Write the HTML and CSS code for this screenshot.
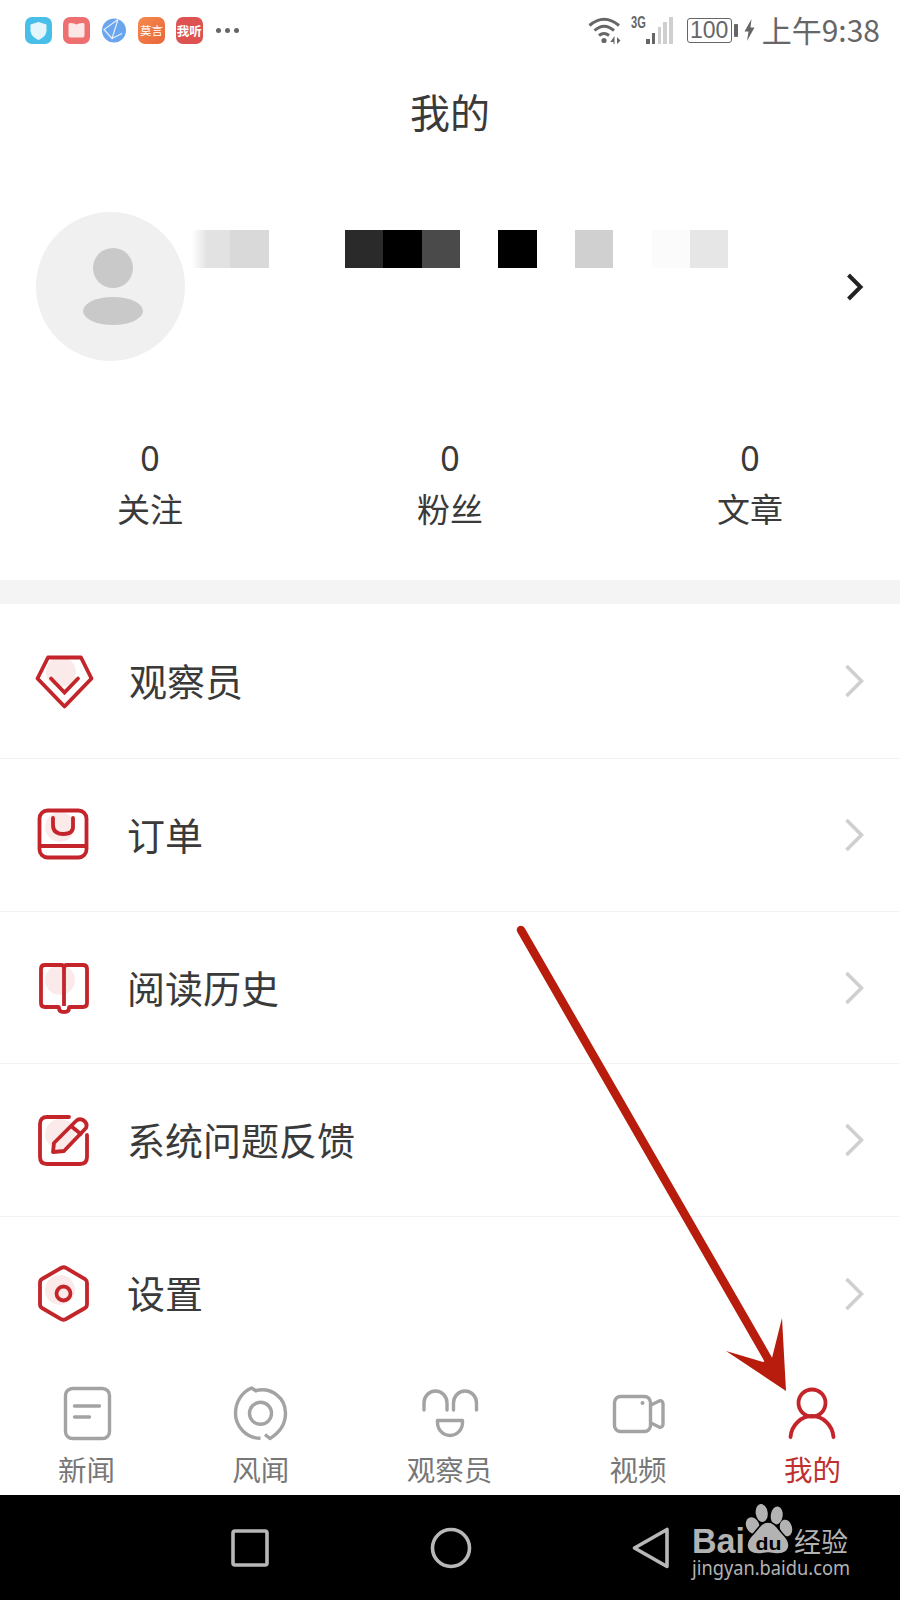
FILE: index.html
```html
<!DOCTYPE html>
<html lang="zh">
<head>
<meta charset="utf-8">
<title>我的</title>
<link rel="stylesheet" href="styles.css">
</head>
<body>
<div class="app">
  <div class="status">
    <div class="notifs">
      <span class="nicon n-blue"><svg width="27" height="27" viewBox="0 0 27 27"><path d="M13.500 5l8 2.500v6c0 4.500-3.500 7.500-8 9.500c-4.500-2-8-5-8-9.500v-6z" fill="#e4f5fb"/></svg></span>
      <span class="nicon n-pink"><svg width="27" height="27" viewBox="0 0 27 27"><path d="M5.500 7.500q0-2 2-1.500q4 0 6 1.500q2-1.500 6-1.500q2-.5 2 1.500v11q0 2-2 2h-12q-2 0-2-2z" fill="#fde6e6"/></svg></span>
      <span class="nicon"><svg width="27" height="27" viewBox="0 0 27 27"><circle cx="14" cy="13.500" r="12" fill="#6aa5ee"/><path d="M18 2.500l-14 10l8 9l6-19M12 21.500l10-5" fill="none" stroke="#e4effc" stroke-width="1.200"/></svg></span>
      <span class="nicon n-orange">莫言</span>
      <span class="nicon n-red">我听</span>
      <span class="ndots"><i></i><i></i><i></i></span>
    </div>
    <div class="sysinfo">
      <svg class="wifi" width="34" height="28" viewBox="0 0 34 28"><g fill="none" stroke="#666" stroke-width="3"><path d="M1.500 9.500Q16-3 31 9.500"/><path d="M6.500 14.500Q16 6 26 14.500"/><path d="M11 19.500Q16 15.500 21 19.500"/></g><circle cx="16" cy="24.500" r="2.600" fill="#666"/><path d="M23 25l3.500-5v8h-1v-2h-3.500zM29 21l3.500 3.500l-3.500 3.500z" fill="#666"/></svg>
      <div class="signal">
        <span class="g3">3G</span>
        <span class="bars"><i class="b1"></i><i class="b2"></i><i class="b3"></i><i class="b4"></i><i class="b5"></i></span>
      </div>
      <div class="battery"><span class="bat-box">100</span><i class="bat-nub"></i></div>
      <svg class="bolt" width="11" height="22" viewBox="0 0 11 22"><path d="M7.500 0L0.500 12.500H4.500L3 22L10.500 8.500H6.500z" fill="#666"/></svg>
      <span class="clock">上午9:38</span>
    </div>
  </div>

  <h1 class="title">我的</h1>

  <div class="profile">
    <div class="avatar"><i class="av-head"></i><i class="av-body"></i></div>
    <div class="name">
      <i class="t t-fade"></i><i class="t t-d9"></i><i class="t"></i><i class="t"></i><i class="t t-2a"></i><i class="t t-00"></i><i class="t t-4a"></i><i class="t"></i><i class="t t-00"></i><i class="t"></i><i class="t t-d0"></i><i class="t"></i><i class="t t-fb"></i><i class="t t-e6"></i>
    </div>
    <svg class="pro-chev" width="18" height="28" viewBox="0 0 18 28"><path d="M2.500 2l12 12l-12 12" fill="none" stroke="#222" stroke-width="4"/></svg>
  </div>

  <div class="stats">
    <div class="stat"><span class="num">0</span><span class="lab">关注</span></div>
    <div class="stat"><span class="num">0</span><span class="lab">粉丝</span></div>
    <div class="stat"><span class="num">0</span><span class="lab">文章</span></div>
  </div>

  <div class="band"></div>

  <div class="menu">
    <div class="row">
      <svg class="ico" width="60" height="60" viewBox="0 0 60 60"><circle cx="27" cy="21" r="15" fill="#fbeaea"/><path d="M14 6.500h33L57.500 27.500L30.500 55.500L3.500 27.500z" class="red" stroke-linejoin="round"/><path d="M17 27.500l13.500 14L44 27.500" class="red" stroke-linecap="round"/></svg>
      <span class="lbl lbl-a">观察员</span>
      <svg class="chev" width="20" height="34" viewBox="0 0 20 34"><path d="M2.500 2l15 15l-15 15" fill="none" stroke="#cfcfcf" stroke-width="3.600"/></svg>
    </div>
    <div class="row">
      <svg class="ico" width="60" height="60" viewBox="1 0 60 60"><circle cx="27" cy="22" r="15" fill="#fbeaea"/><rect x="6.500" y="5.500" width="47" height="47" rx="8" class="red"/><path d="M6.500 41h47" class="red"/><path d="M20 13v7q0 9 10.500 9T40 20v-7" class="red" stroke-linecap="round"/></svg>
      <span class="lbl">订单</span>
      <svg class="chev" width="20" height="34" viewBox="0 0 20 34"><path d="M2.500 2l15 15l-15 15" fill="none" stroke="#cfcfcf" stroke-width="3.600"/></svg>
    </div>
    <div class="row">
      <svg class="ico" width="60" height="60" viewBox="1 0 60 60"><circle cx="27" cy="22" r="15" fill="#fbeaea"/><path d="M12 7h16q3 0 3 3q0-3 3-3h16q4 0 4 4v34q0 4-4 4H37q-1 0-1 1q0 4-5 4t-5-4q0-1-1-1H12q-4 0-4-4V11q0-4 4-4z" class="red" stroke-linejoin="round"/><path d="M31 10v38" class="red"/></svg>
      <span class="lbl">阅读历史</span>
      <svg class="chev" width="20" height="34" viewBox="0 0 20 34"><path d="M2.500 2l15 15l-15 15" fill="none" stroke="#cfcfcf" stroke-width="3.600"/></svg>
    </div>
    <div class="row">
      <svg class="ico" width="60" height="60" viewBox="1 0 60 60"><circle cx="27" cy="24" r="15" fill="#fbeaea"/><path d="M36 7H14q-7 0-7 7v33q0 7 7 7h33q7 0 7-7V25" class="red" stroke-linecap="round"/><path d="M20 42l1-9L43 11q3-3 7-1q5 3 3 8L31 41z" class="red" stroke-linejoin="round"/><path d="M38 16l11 9" class="red"/></svg>
      <span class="lbl">系统问题反馈</span>
      <svg class="chev" width="20" height="34" viewBox="0 0 20 34"><path d="M2.500 2l15 15l-15 15" fill="none" stroke="#cfcfcf" stroke-width="3.600"/></svg>
    </div>
    <div class="row">
      <svg class="ico" width="60" height="60" viewBox="1 0 60 60"><circle cx="27" cy="26" r="15" fill="#fbeaea"/><path d="M28 4q3-1.500 5 0l19 11q2 1.500 2 4v21q0 3-2 4L33 55q-3 1.500-5 0L9 44q-2-1-2-4V19q0-3 2-4z" class="red"/><circle cx="30.500" cy="29.500" r="7" class="red"/></svg>
      <span class="lbl lbl-up">设置</span>
      <svg class="chev" width="20" height="34" viewBox="0 0 20 34"><path d="M2.500 2l15 15l-15 15" fill="none" stroke="#cfcfcf" stroke-width="3.600"/></svg>
    </div>
  </div>

  <div class="tabs">
    <div class="tab">
      <svg width="56" height="60" viewBox="0 0 56 60"><rect x="6.500" y="5.500" width="44" height="50" rx="7" class="gray"/><path d="M15.500 23h25M15.500 34h15" class="gray" stroke-linecap="round"/></svg>
      <span>新闻</span>
    </div>
    <div class="tab">
      <svg width="56" height="60" viewBox="0 0 56 60"><path d="M24 8.500L18.500 5C9 9 2.500 19 2.500 30.300C2.500 44 14 55.300 27.500 55.300" class="gray" stroke-linejoin="round"/><path d="M23 7.500C39 4 52.500 15 52.500 30.300C52.500 41 46 50 37 55.500L32 51.500" class="gray" stroke-linejoin="round"/><circle cx="27.500" cy="30.300" r="11" class="gray"/></svg>
      <span>风闻</span>
    </div>
    <div class="tab">
      <svg width="84" height="60" viewBox="0 0 84 60"><path d="M17 27V20a11.500 12 0 0 1 23 0v7M46.500 27V20a11.500 12 0 0 1 23 0v7" class="gray" stroke-linecap="round"/><path d="M30.500 37.500h25v2a12.500 13 0 0 1-25 0z" class="gray" stroke-linejoin="round"/></svg>
      <span>观察员</span>
    </div>
    <div class="tab">
      <svg width="56" height="60" viewBox="0 0 56 60"><rect x="4.500" y="13.500" width="36" height="35" rx="6" class="gray"/><path d="M41 22l8-4q4-1 4 3v20q0 4-4 3l-8-4" class="gray"/><circle cx="32.500" cy="20" r="2" fill="#a3a3a3"/></svg>
      <span>视频</span>
    </div>
    <div class="tab tab-on">
      <svg width="56" height="60" viewBox="0 0 56 60"><circle cx="28" cy="20" r="13.500" class="red"/><path d="M6.500 54c1-12 11-21 21.500-21s20.500 9 21.500 21" class="red" stroke-linecap="round"/></svg>
      <span>我的</span>
    </div>
  </div>

  <div class="nav">
    <svg width="38" height="38" viewBox="0 0 38 38"><rect x="2" y="2" width="34" height="34" rx="2" class="navline"/></svg>
    <svg width="42" height="42" viewBox="0 0 42 42"><circle cx="21" cy="21" r="18.500" class="navline"/></svg>
    <svg width="38" height="42" viewBox="0 0 38 42"><path d="M35 2.500v37L2.500 21z" class="navline" stroke-linejoin="round"/></svg>
  </div>

  <svg class="arrow" width="290" height="490" viewBox="0 0 290 490"><path d="M11 10L262 446" stroke="#b71c0c" stroke-width="8.500" stroke-linecap="round"/><path d="M276 471L272 398L262 438L253 442L216 431z" fill="#b71c0c"/></svg>

  <svg class="logo" width="190" height="95" viewBox="0 0 190 95">
    <text x="12" y="58" class="logo-bai" textLength="53" lengthAdjust="spacingAndGlyphs">Bai</text>
    <g fill="#b3b3b3">
      <ellipse cx="81.700" cy="18" rx="6" ry="9" transform="rotate(-8 81.700 18)"/>
      <ellipse cx="96.700" cy="20.500" rx="6" ry="9" transform="rotate(8 96.700 20.500)"/>
      <ellipse cx="72.700" cy="30.500" rx="6.500" ry="8.500" transform="rotate(-25 72.700 30.500)"/>
      <ellipse cx="106" cy="33" rx="6" ry="8.500" transform="rotate(-15 106 33)"/>
      <path d="M88 27c6 0 9 5 14 11c5 5 7 8 7 12c0 6-5 9-11 9c-4 0-7-1-10-1s-6 1-10 1c-6 0-11-3-11-9c0-4 2-7 7-12c5-6 8-11 14-11z" stroke="#000" stroke-width="1.500"/>
    </g>
    <text x="88.500" y="55" class="logo-du" text-anchor="middle" textLength="26" lengthAdjust="spacingAndGlyphs">du</text>
    <text x="114" y="57" class="logo-cn">经验</text>
    <text x="12" y="80" class="logo-url" textLength="158" lengthAdjust="spacingAndGlyphs">jingyan.baidu.com</text>
  </svg>
</div>
</body>
</html>
```
FILE: styles.css
```css
* { box-sizing: border-box; }
html, body { margin: 0; padding: 0; }
body { width: 900px; height: 1600px; overflow: hidden; background: #fff; font-family: "Noto Sans CJK SC", "Noto Sans", sans-serif; color: #333; }
.app { position: relative; width: 900px; height: 1600px; display: flex; flex-direction: column; overflow: hidden; background: #fff; }
svg { display: block; }
i { display: block; }

.status { height: 60px; flex: none; padding: 0 20px 0 25px; display: flex; align-items: center; justify-content: space-between; }
.notifs { display: flex; align-items: center; gap: 10.700px; }
.nicon { width: 27px; height: 27px; border-radius: 7px; display: flex; align-items: center; justify-content: center; font-size: 12.500px; line-height: 27px; color: #fff; white-space: nowrap; overflow: hidden; }
.n-blue { background: #47bfe9; }
.n-pink { background: #ee6f70; }
.n-orange { background: linear-gradient(135deg, #f58a4c, #e9663c); font-size: 11.500px; }
.n-red { background: #dc5352; font-weight: 700; }
.ndots { display: flex; gap: 4px; margin-left: 3px; }
.ndots i { width: 5px; height: 5px; border-radius: 50%; background: #666; }

.sysinfo { display: flex; align-items: center; }
.wifi { margin-right: 8px; }
.signal { position: relative; width: 43px; height: 28px; margin-right: 14px; }
.g3 { position: absolute; left: 1px; top: -2px; font: 700 17px/17px "Liberation Sans", sans-serif; color: #666; transform: scaleX(.65); transform-origin: left; }
.bars { position: absolute; right: 0; bottom: 0; display: flex; align-items: flex-end; gap: 2.300px; }
.bars i { width: 3.500px; background: #cfcfcf; }
.bars .b1 { height: 5px; background: #666; }
.bars .b2 { height: 11px; background: #666; }
.bars .b3 { height: 17px; }
.bars .b4 { height: 22px; }
.bars .b5 { height: 27px; }
.battery { display: flex; align-items: center; gap: 2px; margin-right: 6px; }
.bat-box { width: 45px; height: 25px; border: 1.500px solid #666; border-radius: 3px; font: 400 23px/22px "Liberation Sans", sans-serif; color: #666; text-align: center; }
.bat-nub { width: 4px; height: 13px; background: #666; border-radius: 1px; }
.bolt { margin-right: 7px; }
.clock { font-size: 30px; line-height: 38px; height: 40px; color: #666; white-space: nowrap; }

.title { margin: 0; height: 102px; flex: none; display: flex; align-items: center; justify-content: center; font-size: 40px; font-weight: 400; color: #3a3a3a; }

.profile { flex: none; display: flex; align-items: center; padding: 50px 36px 0; height: 199px; }
.avatar { width: 149px; height: 149px; flex: none; border-radius: 50%; background: #f0f0f0; display: flex; flex-direction: column; align-items: center; padding: 36px 0 0 4px; gap: 9px; }
.av-head { width: 40px; height: 40px; border-radius: 50%; background: #c9c9c9; }
.av-body { width: 60px; height: 28px; border-radius: 50%; background: #c9c9c9; }
.name { flex: 1; align-self: flex-start; margin: 18px 0 0 7px; display: flex; }
.t { width: 38.300px; height: 38px; }
.t-fade { background: linear-gradient(90deg, #fff, #e2e2e2 40%); }
.t-d9 { background: #d9d9d9; }
.t-2a { background: #2a2a2a; }
.t-00 { background: #000; }
.t-4a { background: #4a4a4a; }
.t-d0 { background: #d0d0d0; }
.t-fb { background: #fbfbfb; }
.t-e6 { background: #e6e6e6; }
.pro-chev { flex: none; }

.stats { flex: none; display: grid; grid-template-columns: repeat(3, 300px); margin-top: 74px; height: 145px; }
.stat { display: flex; flex-direction: column; align-items: center; }
.num { font-size: 34px; line-height: 46px; color: #3a3a3a; font-family: "Noto Sans", sans-serif; }
.lab { font-size: 33px; line-height: 48px; margin-top: 3px; color: #3a3a3a; }

.band { flex: none; height: 24px; background: #f4f4f4; }

.menu { flex: none; }
.row { height: 153px; display: flex; align-items: center; padding: 0 36px 0 34px; border-bottom: 1px solid #f3f3f3; }
.row:first-child { height: 155px; }
.row:nth-child(3) { height: 152px; }
.row:last-child { border-bottom: 0; }
.ico { flex: none; margin-right: 33px; }
.lbl { flex: 1; font-size: 38px; line-height: 48px; height: 50px; color: #3a3a3a; white-space: nowrap; }
.lbl-a { padding-left: 2px; }
.lbl-up { line-height: 46px; }
.chev { flex: none; }
.red { fill: none; stroke: #c3252b; stroke-width: 3.800; }
.gray { fill: none; stroke: #a3a3a3; stroke-width: 3.400; }

.tabs { flex: 1; display: flex; justify-content: space-between; padding: 13px 59px 0 58px; background: #fff; }
.tab { display: flex; flex-direction: column; align-items: center; font-size: 28.500px; line-height: 40px; color: #777; }
.tab span { margin-top: 6px; white-space: nowrap; }
.tab-on { color: #c0302c; }

.nav { flex: none; height: 105px; background: #000; display: flex; align-items: center; padding: 0 0 0 231px; gap: 160.500px; }
.navline { fill: none; stroke: #b8b8b8; stroke-width: 3.600; }

.arrow { position: absolute; left: 510px; top: 920px; }
.logo { position: absolute; left: 680px; top: 1495px; }
.logo-bai { font: 700 35px "Liberation Sans", sans-serif; fill: #b3b3b3; }
.logo-du { font: 700 18px "Liberation Sans", sans-serif; fill: #000; }
.logo-cn { font: 400 27px "Noto Sans CJK SC", sans-serif; fill: #b3b3b3; }
.logo-url { font: 400 20px "Noto Sans", sans-serif; fill: #b3b3b3; }
```
